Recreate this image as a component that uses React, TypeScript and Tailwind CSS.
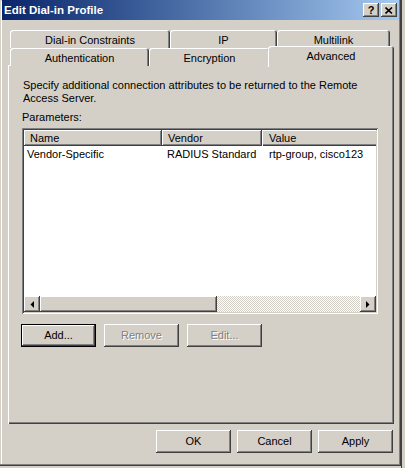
import React from "react";

const raised =
  "shadow-[inset_-1px_-1px_#404040,inset_1px_1px_#ffffff,inset_-2px_-2px_#808080,inset_2px_2px_#d4d0c8]";
const sunken =
  "shadow-[inset_1px_1px_#808080,inset_-1px_-1px_#ffffff,inset_2px_2px_#404040,inset_-2px_-2px_#d4d0c8]";
const tabShadow =
  "shadow-[inset_1px_1px_#ffffff,inset_-1px_0_#404040,inset_-2px_0_#808080]";

function Tab({ label, w }: { label: string; w: string }) {
  return (
    <div
      className={`${w} h-full bg-[#d4d0c8] rounded-t-[3px] ${tabShadow} flex items-center justify-center pt-[2px]`}
    >
      {label}
    </div>
  );
}

function Btn({
  label,
  disabled,
  def,
}: {
  label: string;
  disabled?: boolean;
  def?: boolean;
}) {
  return (
    <div
      className={`w-[75px] h-[23px] bg-[#d4d0c8] flex items-center justify-center ${
        def ? "border border-black" : ""
      }`}
    >
      <div
        className={`w-full h-full flex items-center justify-center ${raised} ${
          disabled ? "text-[#808080] [text-shadow:1px_1px_#ffffff]" : "text-black"
        }`}
      >
        {label}
      </div>
    </div>
  );
}

function Arrow({ dir }: { dir: "left" | "right" }) {
  return (
    <div className={`w-[16px] h-[16px] bg-[#d4d0c8] ${raised} flex items-center justify-center`}>
      <svg width="4" height="7" viewBox="0 0 4 7">
        {dir === "left" ? (
          <polygon points="4,0 4,7 0.5,3.5" fill="#000" />
        ) : (
          <polygon points="0,0 0,7 3.5,3.5" fill="#000" />
        )}
      </svg>
    </div>
  );
}

export default function App() {
  return (
    <div className="w-[405px] h-[468px] bg-[#d4d0c8] flex overflow-hidden font-['Liberation_Sans',Arial,sans-serif] text-[11px] leading-[13px] text-black">
      <div className="w-[401px] h-[466px] shrink-0 flex flex-col px-[2px] shadow-[inset_-1px_-1px_#404040,inset_-2px_-2px_#808080,inset_1px_1px_#d4d0c8,inset_2px_2px_#ffffff]">
        {/* Title bar */}
        <div className="h-[20px] shrink-0 bg-linear-to-r from-[#0a246a] to-[#a6caf0] flex items-center justify-between pl-[2px] pr-[2px]">
          <span className="text-white font-bold text-[11.5px]">Edit Dial-in Profile</span>
          <div className="flex gap-[2px]">
            <div className={`w-[16px] h-[14px] bg-[#d4d0c8] ${raised} flex items-center justify-center font-bold text-[11px] leading-none`}>
              ?
            </div>
            <div className={`w-[16px] h-[14px] bg-[#d4d0c8] ${raised} flex items-center justify-center`}>
              <svg width="8" height="7" viewBox="0 0 8 7">
                <path d="M0.5 0.5 L7 6.5 M7 0.5 L0.5 6.5" stroke="#000" strokeWidth="1.6" />
              </svg>
            </div>
          </div>
        </div>

        {/* Body */}
        <div className="flex flex-col pl-[6px] pt-[10px]">
          {/* Tab row 1 */}
          <div className="flex ml-[2px] h-[18px]">
            <Tab label="Dial-in Constraints" w="w-[160px]" />
            <Tab label="IP" w="w-[107px]" />
            <Tab label="Multilink" w="w-[113px]" />
          </div>
          {/* Tab row 2 */}
          <div className="flex ml-[2px] h-[18px] relative z-10">
            <Tab label="Authentication" w="w-[139px]" />
            <Tab label="Encryption" w="w-[121px]" />
            <div
              className={`w-[126px] h-[21px] -mt-[2px] -ml-[2px] bg-[#d4d0c8] rounded-t-[3px] ${tabShadow} flex items-start justify-center pt-[4px]`}
            >
              Advanced
            </div>
          </div>

          {/* Panel */}
          <div className="w-[386px] h-[359px] -mt-[1px] bg-[#d4d0c8] shadow-[inset_1px_1px_#ffffff,inset_-1px_-1px_#404040,inset_-2px_-2px_#808080] pl-[14px] pt-[14px] flex flex-col">
            <div className="pl-[1px]">
              Specify additional connection attributes to be returned to the Remote
              <br />
              Access Server.
            </div>
            <div className="mt-[6px]">Parameters:</div>
            <div className={`mt-[4px] w-[356px] h-[186px] bg-white ${sunken} p-[2px] flex flex-col`}>
              <div className="flex h-[16px] shrink-0 overflow-hidden">
                <div className={`w-[138px] shrink-0 bg-[#d4d0c8] ${raised} pl-[6px] flex items-center`}>Name</div>
                <div className={`w-[100px] shrink-0 bg-[#d4d0c8] ${raised} pl-[6px] flex items-center`}>Vendor</div>
                <div className={`flex-1 bg-[#d4d0c8] shadow-[inset_1px_1px_#ffffff,inset_0_-1px_#404040,inset_0_-2px_#808080] pl-[7px] flex items-center`}>Value</div>
              </div>
              <div className="flex-1">
                <div className="flex h-[14px] items-center mt-[1px]">
                  <div className="w-[138px] shrink-0 pl-[3px]">Vendor-Specific</div>
                  <div className="w-[100px] shrink-0 pl-[5px]">RADIUS Standard</div>
                  <div className="flex-1 pl-[7px]">rtp-group, cisco123</div>
                </div>
              </div>
              <div className="flex h-[16px] shrink-0">
                <Arrow dir="left" />
                <div className={`w-[177px] h-[16px] bg-[#d4d0c8] ${raised}`} />
                <div className="flex-1 h-[16px] bg-[repeating-conic-gradient(#d4d0c8_0_25%,#ffffff_0_50%)] bg-[length:2px_2px]" />
                <Arrow dir="right" />
              </div>
            </div>

            <div className="flex gap-[8px] mt-[10px] -ml-[1px]">
              <Btn label="Add..." def />
              <Btn label="Remove" disabled />
              <Btn label="Edit..." disabled />
            </div>
          </div>

          {/* Bottom buttons */}
          <div className="flex justify-end gap-[6px] w-[386px] mt-[6px] pr-[1px]">
            <Btn label="OK" />
            <Btn label="Cancel" />
            <Btn label="Apply" />
          </div>
        </div>
      </div>
      <div className="flex-1 h-full bg-[#d4d0c8] border-l border-[#404040]" />
    </div>
  );
}
